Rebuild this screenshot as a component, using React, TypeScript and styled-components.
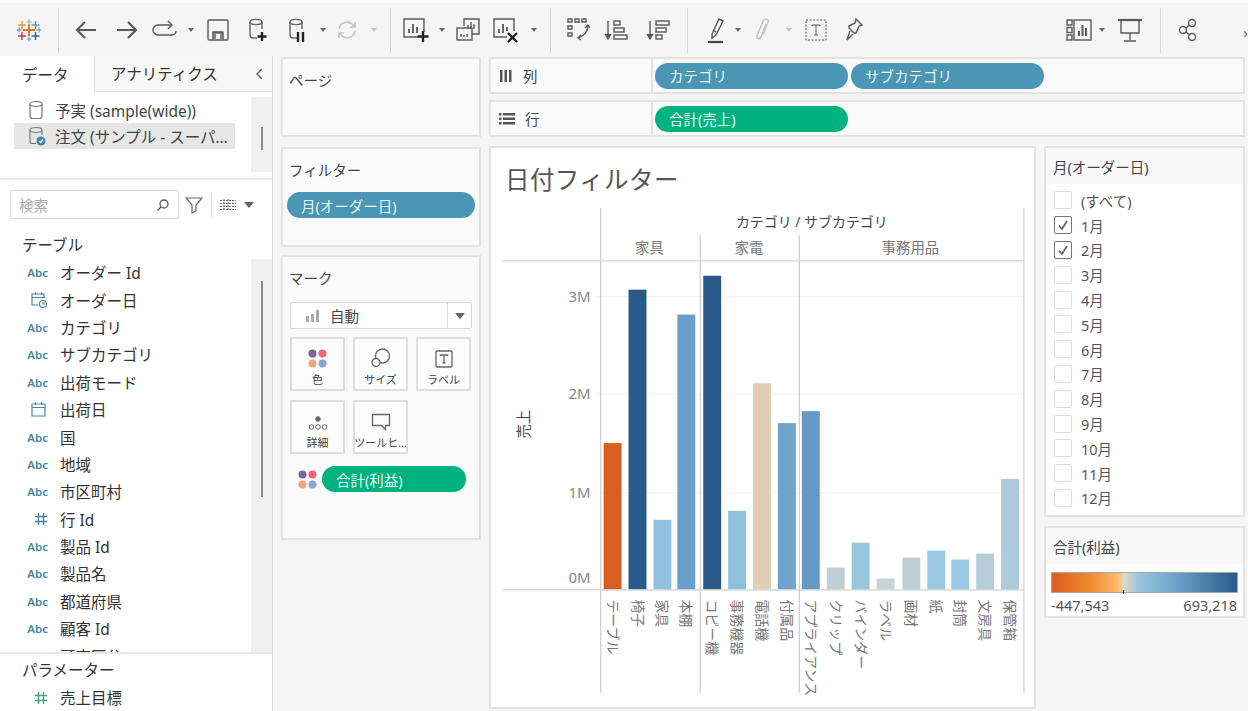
import React from "react";
import styled, { createGlobalStyle } from "styled-components";

const GlobalStyle = createGlobalStyle`
  html, body { margin: 0; padding: 0; background: #f5f5f5; }
  body { font-family: "Noto Sans", "Noto Sans CJK JP", sans-serif; color: #444; }
  * { box-sizing: border-box; }
`;

const months = ["(すべて)", "1月", "2月", "3月", "4月", "5月", "6月", "7月", "8月", "9月", "10月", "11月", "12月"];

const fields = [
  { kind: "abc", name: "オーダー Id" },
  { kind: "datetime", name: "オーダー日" },
  { kind: "abc", name: "カテゴリ" },
  { kind: "abc", name: "サブカテゴリ" },
  { kind: "abc", name: "出荷モード" },
  { kind: "date", name: "出荷日" },
  { kind: "abc", name: "国" },
  { kind: "abc", name: "地域" },
  { kind: "abc", name: "市区町村" },
  { kind: "num", name: "行 Id" },
  { kind: "abc", name: "製品 Id" },
  { kind: "abc", name: "製品名" },
  { kind: "abc", name: "都道府県" },
  { kind: "abc", name: "顧客 Id" },
  { kind: "abc", name: "顧客区分" },
];

const bars = [
  { name: "テーブル", x: 603, top: 444, color: "#d95f20" },
  { name: "椅子", x: 628, top: 290, color: "#2a5a8a" },
  { name: "家具", x: 653, top: 521, color: "#90c2e0" },
  { name: "本棚", x: 677, top: 315, color: "#6a9fca" },
  { name: "コピー機", x: 703, top: 276, color: "#2a5a8a" },
  { name: "事務機器", x: 728, top: 512, color: "#8fc0de" },
  { name: "電話機", x: 753, top: 384, color: "#e0cfb4" },
  { name: "付属品", x: 778, top: 424, color: "#6fa3cc" },
  { name: "アプライアンス", x: 802, top: 412, color: "#659ac6" },
  { name: "クリップ", x: 827, top: 569, color: "#bfd0d4" },
  { name: "バインダー", x: 852, top: 544, color: "#96c6e0" },
  { name: "ラベル", x: 877, top: 580, color: "#c5d3d6" },
  { name: "画材", x: 903, top: 559, color: "#bed0d6" },
  { name: "紙", x: 928, top: 552, color: "#98c8e2" },
  { name: "封筒", x: 952, top: 561, color: "#9acae3" },
  { name: "文房具", x: 977, top: 555, color: "#b4ced9" },
  { name: "保管箱", x: 1002, top: 480, color: "#aecbdb" },
];

const Logo = () => {
  const crosses = [
    { x: 28.5, y: 29, r: 6, t: 2, c: "#e8762d" },
    { x: 21.5, y: 24, r: 4, t: 1.4, c: "#f28e2b" },
    { x: 35, y: 24, r: 4, t: 1.4, c: "#5b9aa8" },
    { x: 21.5, y: 35, r: 4, t: 1.4, c: "#c72e45" },
    { x: 35, y: 35, r: 4, t: 1.4, c: "#2f5a92" },
    { x: 28.5, y: 21, r: 2.5, t: 1, c: "#7ab0c8" },
    { x: 28.5, y: 38, r: 2.5, t: 1, c: "#6a97c0" },
    { x: 18.5, y: 29, r: 2.5, t: 1, c: "#6a8fb5" },
    { x: 38.5, y: 29, r: 2.5, t: 1, c: "#6a8fb5" },
  ];
  return (
    <svg width="26" height="26" viewBox="15.5 16 26 26">
      {crosses.map((k, i) => (
        <g key={i} fill={k.c}>
          <rect x={k.x - k.r} y={k.y - k.t / 2} width={k.r * 2} height={k.t} />
          <rect x={k.x - k.t / 2} y={k.y - k.r} width={k.t} height={k.r * 2} />
        </g>
      ))}
    </svg>
  );
};

const I = ({ w = 26, h = 26, children, stroke = "#595959", sw = 1.4 }: { w?: number; h?: number; children: React.ReactNode; stroke?: string; sw?: number }) => (
  <svg width={w} height={h} viewBox={`0 0 ${w} ${h}`} fill="none" stroke={stroke} strokeWidth={sw}>
    {children}
  </svg>
);

const Cyl = ({ stroke = "#666" }: { stroke?: string }) => (
  <>
    <ellipse cx="9" cy="5" rx="6" ry="2.6" stroke={stroke} />
    <path d="M3 5v13a3 3 0 0 0 3 3h4M15 5v7" stroke={stroke} />
  </>
);

const toolbarItems: { c: number; w: number; node: React.ReactNode }[] = [
  { c: 28.5, w: 26, node: <Logo /> },
  { c: 58.5, w: 1, node: "sep" },
  { c: 86, w: 24, node: <I w={24} h={24} sw={2.2}><path d="M22 12H3M11 4l-8 8 8 8" /></I> },
  { c: 127, w: 24, node: <I w={24} h={24} sw={2.2}><path d="M2 12h19M13 4l8 8-8 8" /></I> },
  { c: 165, w: 26, node: <I w={26} h={20}><path d="M19 5H6a4.5 4.5 0 0 0 0 10h14a4 4 0 0 0 4-4" /><path d="M16 1l4 4-4 4" fill="none" /></I> },
  { c: 191, w: 7, node: "caret" },
  { c: 218, w: 22, node: <I w={22} h={22}><rect x="1" y="1" width="20" height="20" rx="1" /><path d="M6 20v-7h10v7" fill="#888" /><rect x="9" y="15" width="4" height="5" fill="#fff" stroke="none" /></I> },
  { c: 258, w: 22, node: <I w={22} h={26}><Cyl /><path d="M15 15v9M10.5 19.500h9" stroke="#222" strokeWidth="2.4" /></I> },
  { c: 297, w: 20, node: <I w={20} h={26}><Cyl /><path d="M11 15v10M16 15v10" stroke="#222" strokeWidth="2.4" /></I> },
  { c: 323, w: 7, node: "caret" },
  { c: 347, w: 22, node: <I w={22} h={22} stroke="#c4c4c4" sw={1.6}><path d="M3 10a8 8 0 0 1 14-4l2 2M19 12a8 8 0 0 1-14 4l-2-2M19 3v5h-5M3 19v-5h5" /></I> },
  { c: 374, w: 7, node: "lightcaret" },
  { c: 390, w: 1, node: "sep" },
  { c: 416, w: 26, node: <I w={26} h={26}><path d="M15 20H1V2h20v13" /><path d="M6 16v-4M10 16V7M14 16v-6" strokeWidth="1.8" /><path d="M20 14v11M14.500 19.500h11" stroke="#222" strokeWidth="2.4" /></I> },
  { c: 442, w: 7, node: "caret" },
  { c: 468, w: 24, node: <I w={24} h={24}><path d="M8 8V1h15v15h-7" /><path d="M12 11V7M15 11V4M18 11V6" /><rect x="1" y="10" width="15" height="12" /><path d="M5 19v-3M8 19v-2M11 19v-3" /></I> },
  { c: 506, w: 26, node: <I w={26} h={26}><path d="M14 20H1V2h20v12" /><path d="M6 16v-4M10 16V7M14 14v-4" strokeWidth="1.8" /><path d="M15 16l9 9M24 16l-9 9" stroke="#222" strokeWidth="2.4" /></I> },
  { c: 534, w: 7, node: "caret" },
  { c: 550, w: 1, node: "sep" },
  { c: 578, w: 24, node: <I w={24} h={26}><path d="M2 2h4v3H2zM9 2h4v3H9zM16 2h4v3h-4zM2 9h4v3H2zM2 16h4v3H2z" sw={1} /><path d="M22 8c0 7-4 11-10 13" /><path d="M19 11l3-3 2 3M15 18l-3 3 3 2" /></I> },
  { c: 616, w: 24, node: <I w={24} h={24}><path d="M4 3v17M1 16l3 5 3-5" fill="#555" /><rect x="10" y="3" width="6" height="4" /><rect x="10" y="10" width="10" height="4" /><rect x="10" y="17" width="13" height="4" /></I> },
  { c: 658, w: 24, node: <I w={24} h={24}><path d="M4 3v17M1 16l3 5 3-5" fill="#555" /><rect x="10" y="3" width="13" height="4" /><rect x="10" y="10" width="10" height="4" /><rect x="10" y="17" width="6" height="4" /></I> },
  { c: 687, w: 1, node: "sep" },
  { c: 716, w: 18, node: <I w={18} h={28}><path d="M5 18L12 3l4 2-7 14-4 3z" /><path d="M9 16l-3-2" /><path d="M1 26h15" strokeWidth="2.200" stroke="#444" /></I> },
  { c: 738, w: 7, node: "caret" },
  { c: 762, w: 14, node: <I w={14} h={26} stroke="#c4c4c4" sw={1.5}><path d="M11 7L6 20c-1 3-5 2-4-1L8 4c1-3 6-2 5 1L8 18" /></I> },
  { c: 789, w: 7, node: "lightcaret" },
  { c: 816, w: 22, node: <I w={22} h={22} sw={1}><rect x="1" y="1" width="20" height="20" strokeDasharray="2 1.500" /><path d="M7 7V6h8v1M11 6v10M9 16h4" sw={1.2} /></I> },
  { c: 854, w: 18, node: <I w={18} h={26}><path d="M11 2l6 6-3 1-3 7-2 0-5-5 0-2 6-3zM5 14l-3 9 6-6" /></I> },
  { c: 1079, w: 26, node: <I w={26} h={22}><path d="M1 1h5v5H1zM1 8.500h5v5H1zM1 16h5v5H1z" sw={1.1} /><rect x="8" y="1" width="17" height="20" /><path d="M13 17v-5M16.500 17V6M20 17V9" strokeWidth="2" /></I> },
  { c: 1102, w: 7, node: "caret" },
  { c: 1130, w: 24, node: <I w={24} h={26}><path d="M0 3h24" strokeWidth="2.200" /><path d="M3 3v13h18V3M12 16v7M6 24h12" /></I> },
  { c: 1160, w: 1, node: "sep" },
  { c: 1188, w: 20, node: <I w={20} h={24}><circle cx="14" cy="5" r="3.500" /><circle cx="14" cy="19" r="3.500" /><circle cx="5" cy="12" r="3.500" /><path d="M8 10l3.500-3M8 14l3.500 3" /></I> },
];

const Page = styled.div`
  width: 1248px;
  height: 711px;
  display: flex;
  flex-direction: column;
  overflow: hidden;
  background: #f5f5f5;
`;

const Toolbar = styled.div`
  height: 56px;
  flex: none;
  display: flex;
  align-items: center;
  border-top: 3px solid #fcfcfc;
  padding-top: 1px;
  position: relative;
`;

const ToolSlot = styled.div<{ $w: number; $ml: number }>`
  width: ${(p) => p.$w}px;
  margin-left: ${(p) => p.$ml}px;
  flex: none;
  display: flex;
  align-items: center;
  justify-content: center;
  svg { display: block; flex: none; }
`;

const ToolSep = styled.div`
  width: 1px;
  height: 45px;
  background: #d8d8d8;
`;

const Caret = styled.span<{ $light?: boolean }>`
  width: 0;
  height: 0;
  border-left: 3.5px solid transparent;
  border-right: 3.5px solid transparent;
  border-top: 4px solid ${(p) => (p.$light ? "#c4c4c4" : "#666")};
`;

const ViewSelect = styled.div`
  width: 147px;
  height: 30px;
  margin-left: 24px;
  flex: none;
  display: flex;
  align-items: center;
  border: 1px solid #d4d4d4;
  border-radius: 2px;
  background: #f7f7f7;
  font-size: 16px;
  color: #333;
`;

const ViewSelectText = styled.span`
  flex: 1;
  padding-left: 9px;
`;

const ViewSelectArrow = styled.span`
  width: 23px;
  height: 100%;
  display: flex;
  align-items: center;
  justify-content: center;
  border-left: 1px solid #dcdcdc;
`;

const BigCaret = styled.span`
  width: 0;
  height: 0;
  border-left: 5px solid transparent;
  border-right: 5px solid transparent;
  border-top: 6px solid #666;
`;

const Overflow = styled.span`
  position: absolute;
  right: 0;
  top: 19px;
  font-size: 15px;
  color: #666;
`;

const Body = styled.div`
  flex: 1;
  display: flex;
  min-height: 0;
`;

const Sidebar = styled.aside`
  width: 273px;
  flex: none;
  display: flex;
  flex-direction: column;
  background: #fff;
  border-right: 1px solid #ddd;
  overflow: hidden;
`;

const Tabs = styled.div`
  height: 36px;
  flex: none;
  display: flex;
  font-size: 15.5px;
  color: #333;
`;

const Tab = styled.div<{ $active?: boolean }>`
  display: flex;
  align-items: center;
  flex: ${(p) => (p.$active ? "0 0 94px" : "1")};
  padding-left: ${(p) => (p.$active ? "22px" : "16px")};
  background: ${(p) => (p.$active ? "#fff" : "#f7f7f7")};
  border-left: ${(p) => (p.$active ? "none" : "1px solid #ddd")};
  border-bottom: ${(p) => (p.$active ? "none" : "1px solid #ddd")};
  justify-content: space-between;
`;

const TabChevron = styled.span`
  margin-right: 8px;
  display: flex;
`;

const Sources = styled.div`
  height: 88px;
  flex: none;
  display: flex;
  padding-top: 5px;
  border-bottom: 2px solid #e8e8e8;
`;

const SourceList = styled.div`
  flex: 1;
  padding-left: 14px;
`;

const SourceRow = styled.div<{ $selected?: boolean }>`
  width: 221px;
  height: 26px;
  display: flex;
  align-items: center;
  gap: 9px;
  padding-left: 14px;
  font-size: 15.5px;
  color: #444;
  white-space: nowrap;
  background: ${(p) => (p.$selected ? "#e6e6e6" : "transparent")};
  svg { flex: none; }
`;

const Track = styled.div<{ $h: number }>`
  width: 21px;
  height: ${(p) => p.$h}px;
  flex: none;
  background: #f0f0f0;
  display: flex;
  justify-content: center;
`;

const Thumb = styled.div<{ $top: number; $h: number }>`
  width: 2px;
  height: ${(p) => p.$h}px;
  margin-top: ${(p) => p.$top}px;
  background: #8a8a8a;
`;

const SearchRow = styled.div`
  height: 49px;
  flex: none;
  display: flex;
  align-items: flex-start;
  padding: 10px 0 0 10px;
`;

const SearchBox = styled.div`
  width: 169px;
  height: 29px;
  flex: none;
  display: flex;
  align-items: center;
  justify-content: space-between;
  padding: 0 8px;
  border: 1px solid #d8d8d8;
  border-radius: 2px;
  font-size: 14.5px;
  color: #a8a8a8;
`;

const SearchTools = styled.div`
  display: flex;
  align-items: center;
  height: 29px;
  padding-left: 6px;
  gap: 8px;
`;

const ToolDivider = styled.div`
  width: 1px;
  height: 24px;
  background: #ddd;
`;

const SectionTitle = styled.div<{ $h: number }>`
  height: ${(p) => p.$h}px;
  flex: none;
  display: flex;
  align-items: center;
  padding-left: 22px;
  font-size: 15.5px;
  color: #333;
`;

const FieldArea = styled.div`
  height: 393px;
  flex: none;
  display: flex;
  overflow: hidden;
`;

const FieldList = styled.div`
  flex: 1;
  overflow: hidden;
`;

const FieldRow = styled.div`
  height: 27.4px;
  display: flex;
  align-items: center;
  font-size: 15.5px;
  color: #333;
  white-space: nowrap;
`;

const FieldIcon = styled.span<{ $green?: boolean }>`
  width: 60px;
  flex: none;
  padding-right: 12px;
  display: flex;
  justify-content: flex-end;
  font-size: 11.5px;
  font-weight: 600;
  color: ${(p) => (p.$green ? "#3fa77f" : "#4a86a0")};
`;

const ParamBlock = styled.div`
  flex: 1;
  border-top: 2px solid #e8e8e8;
`;

const Workspace = styled.div`
  flex: 1;
  display: flex;
  gap: 8px;
  padding: 1px 0 0 8px;
  min-width: 0;
`;

const Cards = styled.div`
  width: 200px;
  flex: none;
  display: flex;
  flex-direction: column;
`;

const Card = styled.section<{ $h: number; $mt?: number }>`
  height: ${(p) => p.$h}px;
  margin-top: ${(p) => p.$mt ?? 0}px;
  flex: none;
  background: #fafafa;
  border: 2px solid #e2e2e2;
`;

const CardTitle = styled.div`
  padding: 10px 0 0 6px;
  font-size: 14.5px;
  color: #444;
`;

const Pill = styled.div<{ $color: string; $w: number; $h?: number }>`
  width: ${(p) => p.$w}px;
  height: ${(p) => p.$h ?? 26}px;
  flex: none;
  display: flex;
  align-items: center;
  padding-left: 14px;
  border-radius: 14px;
  background: ${(p) => p.$color};
  color: #e9f5f2;
  font-size: 14.5px;
  white-space: nowrap;
`;

const FilterPillWrap = styled.div`
  padding: 12px 0 0 4px;
`;

const MarkDropdown = styled.div`
  width: 182px;
  height: 27px;
  margin: 14px 0 8px 7px;
  display: flex;
  align-items: center;
  border: 1px solid #d8d8d8;
  border-radius: 2px;
  background: #fff;
  font-size: 14.5px;
  color: #444;
`;

const MarkDropdownLabel = styled.div`
  flex: 1;
  display: flex;
  align-items: center;
  gap: 10px;
  padding-left: 15px;
`;

const MarkDropdownArrow = styled.div`
  width: 24px;
  height: 100%;
  display: flex;
  align-items: center;
  justify-content: center;
  border-left: 1px solid #ddd;
`;

const MarkGrid = styled.div`
  display: grid;
  grid-template-columns: 55px 55px 55px;
  grid-auto-rows: 54px;
  column-gap: 8px;
  row-gap: 9px;
  margin-left: 7px;
`;

const MarkButton = styled.div`
  display: flex;
  flex-direction: column;
  align-items: center;
  justify-content: flex-end;
  gap: 3px;
  padding-bottom: 2px;
  border: 2px solid #dedede;
  background: #fcfcfc;
  font-size: 11px;
  color: #444;
  white-space: nowrap;
  overflow: hidden;
`;

const MarkField = styled.div`
  display: flex;
  align-items: center;
  gap: 5px;
  margin: 12px 0 0 15px;
`;

const Dots = () => (
  <svg width="19" height="19" viewBox="0 0 19 19">
    <circle cx="4.500" cy="4.500" r="4" fill="#7d6499" />
    <circle cx="14.500" cy="4.500" r="4" fill="#f0647c" />
    <circle cx="4.500" cy="14.500" r="4" fill="#f0a57a" />
    <circle cx="14.500" cy="14.500" r="4" fill="#85a7d0" />
  </svg>
);

const Main = styled.div`
  flex: 1;
  min-width: 0;
  display: flex;
  flex-direction: column;
`;

const Shelf = styled.div<{ $mt?: number }>`
  width: 756px;
  height: 37px;
  margin-top: ${(p) => p.$mt ?? 0}px;
  flex: none;
  display: flex;
  background: #fafafa;
  border: 2px solid #e2e2e2;
`;

const ShelfLabel = styled.div`
  width: 162px;
  flex: none;
  display: flex;
  align-items: center;
  gap: 10px;
  padding-left: 8px;
  font-size: 14.5px;
  color: #444;
  border-right: 2px solid #e2e2e2;
`;

const ShelfPills = styled.div`
  display: flex;
  align-items: center;
  gap: 3px;
  padding-left: 2px;
`;

const ViewRow = styled.div`
  display: flex;
  gap: 8px;
  margin-top: 9px;
`;

const ChartCard = styled.section`
  width: 547px;
  height: 563px;
  flex: none;
  display: flex;
  flex-direction: column;
  background: #fff;
  border: 2px solid #e2e2e2;
`;

const ChartTitle = styled.h1`
  height: 58px;
  margin: 0;
  flex: none;
  padding: 13px 0 0 14px;
  font-size: 24.5px;
  font-weight: 400;
  color: #555;
  letter-spacing: 0.4px;
`;

const Legends = styled.div`
  width: 201px;
  flex: none;
  display: flex;
  flex-direction: column;
  gap: 9px;
`;

const LegendCard = styled.section<{ $h: number }>`
  height: ${(p) => p.$h}px;
  flex: none;
  background: #fff;
  border: 2px solid #e2e2e2;
`;

const LegendTitle = styled.div`
  height: 36px;
  display: flex;
  align-items: center;
  padding-left: 7px;
  background: #f8f8f8;
  font-size: 14.5px;
  color: #444;
`;

const MonthList = styled.div`
  padding: 4px 0 0 8px;
`;

const MonthRow = styled.div`
  height: 24.8px;
  display: flex;
  align-items: center;
  gap: 9px;
  font-size: 14.5px;
  color: #555;
`;

const Checkbox = styled.span<{ $checked?: boolean }>`
  width: 18px;
  height: 18px;
  flex: none;
  display: flex;
  align-items: center;
  justify-content: center;
  border-radius: 2px;
  background: #fff;
  border: ${(p) => (p.$checked ? "1.5px solid #777" : "1.5px solid #ddd")};
`;

const GradientBar = styled.div`
  height: 21px;
  margin: 8px 5px 0 5px;
  position: relative;
  border: 1.5px solid #a8a8a8;
  background: linear-gradient(90deg, #d95f20 0%, #f0882f 20%, #fdb863 35%, #e0d9c8 39%, #9cc9e2 46%, #6aa0c8 68%, #2a5a8a 100%);
`;

const GradientTick = styled.span`
  position: absolute;
  left: 71px;
  bottom: -2px;
  width: 1px;
  height: 4px;
  background: #222;
`;

const GradientLabels = styled.div`
  display: flex;
  justify-content: space-between;
  margin: 2px 6px 0 5px;
  font-size: 14.5px;
  color: #555;
`;

const sx = (x: number) => x - 491;
const sy = (y: number) => y - 206;

const Chart = () => (
  <svg width="543" height="503" viewBox="0 0 543 503" style={{ display: "block" }}>
    {[297, 395, 494].map((y) => (
      <line key={y} x1={sx(594)} x2={sx(1025)} y1={sy(y)} y2={sy(y)} stroke="#f2f2f2" strokeWidth="1" />
    ))}
    {bars.map((b) => (
      <rect key={b.name} x={sx(b.x)} y={sy(b.top)} width="18" height={591 - b.top} fill={b.color} />
    ))}
    <g stroke="#d0d0d0" strokeWidth="1.300">
      <line x1={sx(502)} x2={sx(1025)} y1={sy(261)} y2={sy(261)} />
      <line x1={sx(502)} x2={sx(1025)} y1={sy(591.500)} y2={sy(591.500)} />
      <line x1={sx(600)} x2={sx(600)} y1={sy(208)} y2={sy(695)} />
      <line x1={sx(700)} x2={sx(700)} y1={sy(235)} y2={sy(695)} />
      <line x1={sx(799.500)} x2={sx(799.500)} y1={sy(235)} y2={sy(695)} />
      <line x1={sx(1025)} x2={sx(1025)} y1={sy(208)} y2={sy(695)} />
    </g>
    <text x={sx(812)} y={sy(227)} textAnchor="middle" fontSize="14" fill="#444">カテゴリ / サブカテゴリ</text>
    <g fontSize="14.500" fill="#777" textAnchor="middle">
      <text x={sx(649)} y={sy(253)}>家具</text>
      <text x={sx(749)} y={sy(253)}>家電</text>
      <text x={sx(911)} y={sy(253)}>事務用品</text>
    </g>
    <g fontSize="15" fill="#888" textAnchor="end">
      <text x={sx(590)} y={sy(302)}>3M</text>
      <text x={sx(590)} y={sy(400)}>2M</text>
      <text x={sx(590)} y={sy(499)}>1M</text>
      <text x={sx(590)} y={sy(585)}>0M</text>
    </g>
    <text transform={`translate(${sx(528)} ${sy(425)}) rotate(-90)`} textAnchor="middle" fontSize="14.500" fill="#444">売上</text>
    <g fontSize="14" fill="#777">
      {bars.map((b) => (
        <text key={b.name} transform={`translate(${sx(b.x + 4)} ${sy(601)}) rotate(90)`}>{b.name}</text>
      ))}
    </g>
  </svg>
);

const Cylinder = ({ badge }: { badge?: boolean }) => (
  <svg width="18" height="20" viewBox="0 0 18 20" fill="none" stroke="#777" strokeWidth="1.200">
    <ellipse cx="8" cy="4" rx="6" ry="2.500" />
    {badge ? <path d="M2 4v11a2.500 2.500 0 0 0 2.500 2.500H8M14 4v5" /> : <path d="M2 4v12a2.500 2.500 0 0 0 2.500 2.500h7A2.500 2.500 0 0 0 14 16V4" />}
    {badge && (
      <>
        <circle cx="13" cy="15" r="4.500" fill="#3d87a8" stroke="none" />
        <path d="M11 15l1.500 1.500L15 13.500" stroke="#fff" />
      </>
    )}
  </svg>
);

const CalendarIcon = ({ clock }: { clock?: boolean }) => (
  <svg width="18" height="18" viewBox="0 0 18 18" fill="none" stroke="#4a86a0" strokeWidth="1.200">
    <path d={clock ? "M8 14H2V3h12v4" : "M2 3h13v12H2z"} />
    <path d="M2 6.500h13M5.500 1v3M11.500 1v3" />
    {clock && (
      <>
        <circle cx="13" cy="13" r="3.500" />
        <path d="M13 11v2h2" />
      </>
    )}
  </svg>
);

const HashIcon = () => (
  <svg width="14" height="14" viewBox="0 0 14 14" fill="none" stroke="currentColor" strokeWidth="1.400">
    <path d="M4.500 1v12M9.500 1v12M1 4.500h12M1 9.500h12" />
  </svg>
);

const fieldIcon = (kind: string) => {
  if (kind === "abc") return "Abc";
  if (kind === "num") return <HashIcon />;
  if (kind === "date") return <CalendarIcon />;
  return <CalendarIcon clock />;
};

export default function App() {
  let prevEnd = 0;
  return (
    <Page>
      <GlobalStyle />
      <Toolbar>
        {toolbarItems.map((item, i) => {
          const ml = item.c - item.w / 2 - prevEnd;
          prevEnd = item.c + item.w / 2;
          return (
            <React.Fragment key={i}>
              <ToolSlot $w={item.w} $ml={ml}>
                {item.node === "sep" ? <ToolSep /> : item.node === "caret" ? <Caret /> : item.node === "lightcaret" ? <Caret $light /> : item.node}
              </ToolSlot>
            </React.Fragment>
          );
        })}
        <Overflow>›</Overflow>
      </Toolbar>
      <Body>
        <Sidebar>
          <Tabs>
            <Tab $active>データ</Tab>
            <Tab>
              アナリティクス
              <TabChevron>
                <svg width="10" height="14" viewBox="0 0 10 14" fill="none" stroke="#666" strokeWidth="1.500"><path d="M8 2L3 7l5 5" /></svg>
              </TabChevron>
            </Tab>
          </Tabs>
          <Sources>
            <SourceList>
              <SourceRow><Cylinder />予実 (sample(wide))</SourceRow>
              <SourceRow $selected><Cylinder badge />注文 (サンプル - スーパ…</SourceRow>
            </SourceList>
            <Track $h={75}><Thumb $top={30} $h={23} /></Track>
          </Sources>
          <SearchRow>
            <SearchBox>
              検索
              <svg width="14" height="14" viewBox="0 0 14 14" fill="none" stroke="#555" strokeWidth="1.300"><circle cx="8" cy="6" r="4" /><path d="M5 9l-3.500 3.500" /></svg>
            </SearchBox>
            <SearchTools>
              <svg width="18" height="18" viewBox="0 0 18 18" fill="none" stroke="#666" strokeWidth="1.200"><path d="M1 2h16l-6 7v6l-4 2V9z" /></svg>
              <ToolDivider />
              <svg width="16" height="12" viewBox="0 0 16 12" fill="none" stroke="#666" strokeWidth="1"><path d="M0 1.500h16M0 4.500h16M0 7.500h16M0 10.500h16M4 0v12M8 0v12" strokeDasharray="2 1" /></svg>
              <BigCaret />
            </SearchTools>
          </SearchRow>
          <SectionTitle $h={30}>テーブル</SectionTitle>
          <FieldArea>
            <FieldList>
              {fields.map((f) => (
                <FieldRow key={f.name}>
                  <FieldIcon>{fieldIcon(f.kind)}</FieldIcon>
                  {f.name}
                </FieldRow>
              ))}
            </FieldList>
            <Track $h={393}><Thumb $top={22} $h={216} /></Track>
          </FieldArea>
          <ParamBlock>
            <SectionTitle $h={30}>パラメーター</SectionTitle>
            <FieldRow>
              <FieldIcon $green><HashIcon /></FieldIcon>
              売上目標
            </FieldRow>
          </ParamBlock>
        </Sidebar>
        <Workspace>
          <Cards>
            <Card $h={80}><CardTitle>ページ</CardTitle></Card>
            <Card $h={100} $mt={10}>
              <CardTitle>フィルター</CardTitle>
              <FilterPillWrap><Pill $color="#4a96b4" $w={188}>月(オーダー日)</Pill></FilterPillWrap>
            </Card>
            <Card $h={285} $mt={8}>
              <CardTitle>マーク</CardTitle>
              <MarkDropdown>
                <MarkDropdownLabel>
                  <svg width="14" height="12" viewBox="0 0 14 12" fill="#aaa"><rect x="0" y="6" width="3" height="6" /><rect x="5" y="4" width="3" height="8" /><rect x="10" y="0" width="3" height="12" /></svg>
                  自動
                </MarkDropdownLabel>
                <MarkDropdownArrow><BigCaret /></MarkDropdownArrow>
              </MarkDropdown>
              <MarkGrid>
                <MarkButton><Dots />色</MarkButton>
                <MarkButton>
                  <svg width="20" height="20" viewBox="0 0 20 20" fill="none" stroke="#666" strokeWidth="1.300"><circle cx="11.500" cy="8" r="7" /><circle cx="5" cy="14.500" r="4" fill="#fcfcfc" /></svg>
                  サイズ
                </MarkButton>
                <MarkButton>
                  <svg width="18" height="18" viewBox="0 0 18 18" fill="none" stroke="#666" strokeWidth="1.300"><rect x="1" y="1" width="16" height="16" rx="1" /><path d="M5.500 6V5h7v1M9 5v8M7.500 13h3" /></svg>
                  ラベル
                </MarkButton>
                <MarkButton>
                  <svg width="20" height="16" viewBox="0 0 20 16" fill="none" stroke="#666" strokeWidth="1"><circle cx="10" cy="4" r="2.300" fill="#666" /><circle cx="3.500" cy="12" r="2.300" /><circle cx="10" cy="12" r="2.300" /><circle cx="16.500" cy="12" r="2.300" /></svg>
                  詳細
                </MarkButton>
                <MarkButton>
                  <svg width="20" height="18" viewBox="0 0 20 18" fill="none" stroke="#666" strokeWidth="1.300"><path d="M1.500 1.500h17v11h-4v4l-4-4h-9z" /></svg>
                  ツールヒ…
                </MarkButton>
              </MarkGrid>
              <MarkField>
                <Dots />
                <Pill $color="#00b27f" $w={144}>合計(利益)</Pill>
              </MarkField>
            </Card>
          </Cards>
          <Main>
            <Shelf>
              <ShelfLabel>
                <svg width="14" height="14" viewBox="0 0 14 14" fill="#555"><rect x="1" y="1" width="2.500" height="12" /><rect x="5.500" y="1" width="2.500" height="12" /><rect x="10" y="1" width="2.500" height="12" /></svg>
                列
              </ShelfLabel>
              <ShelfPills>
                <Pill $color="#4a96b4" $w={193}>カテゴリ</Pill>
                <Pill $color="#4a96b4" $w={193}>サブカテゴリ</Pill>
              </ShelfPills>
            </Shelf>
            <Shelf $mt={6}>
              <ShelfLabel>
                <svg width="16" height="14" viewBox="0 0 16 14" fill="#555"><rect x="0" y="1" width="2.500" height="2.500" /><rect x="4" y="1" width="12" height="2.500" /><rect x="0" y="5.500" width="2.500" height="2.500" /><rect x="4" y="5.500" width="12" height="2.500" /><rect x="0" y="10" width="2.500" height="2.500" /><rect x="4" y="10" width="12" height="2.500" /></svg>
                行
              </ShelfLabel>
              <ShelfPills>
                <Pill $color="#00b27f" $w={193}>合計(売上)</Pill>
              </ShelfPills>
            </Shelf>
            <ViewRow>
              <ChartCard>
                <ChartTitle>日付フィルター</ChartTitle>
                <Chart />
              </ChartCard>
              <Legends>
                <LegendCard $h={371}>
                  <LegendTitle>月(オーダー日)</LegendTitle>
                  <MonthList>
                    {months.map((m, i) => (
                      <MonthRow key={m}>
                        <Checkbox $checked={i === 1 || i === 2}>
                          {(i === 1 || i === 2) && (
                            <svg width="12" height="12" viewBox="0 0 12 12" fill="none" stroke="#666" strokeWidth="1.800"><path d="M2 6.500L5 10l5-8" /></svg>
                          )}
                        </Checkbox>
                        {m}
                      </MonthRow>
                    ))}
                  </MonthList>
                </LegendCard>
                <LegendCard $h={92}>
                  <LegendTitle>合計(利益)</LegendTitle>
                  <GradientBar><GradientTick /></GradientBar>
                  <GradientLabels><span>-447,543</span><span>693,218</span></GradientLabels>
                </LegendCard>
              </Legends>
            </ViewRow>
          </Main>
        </Workspace>
      </Body>
    </Page>
  );
}
